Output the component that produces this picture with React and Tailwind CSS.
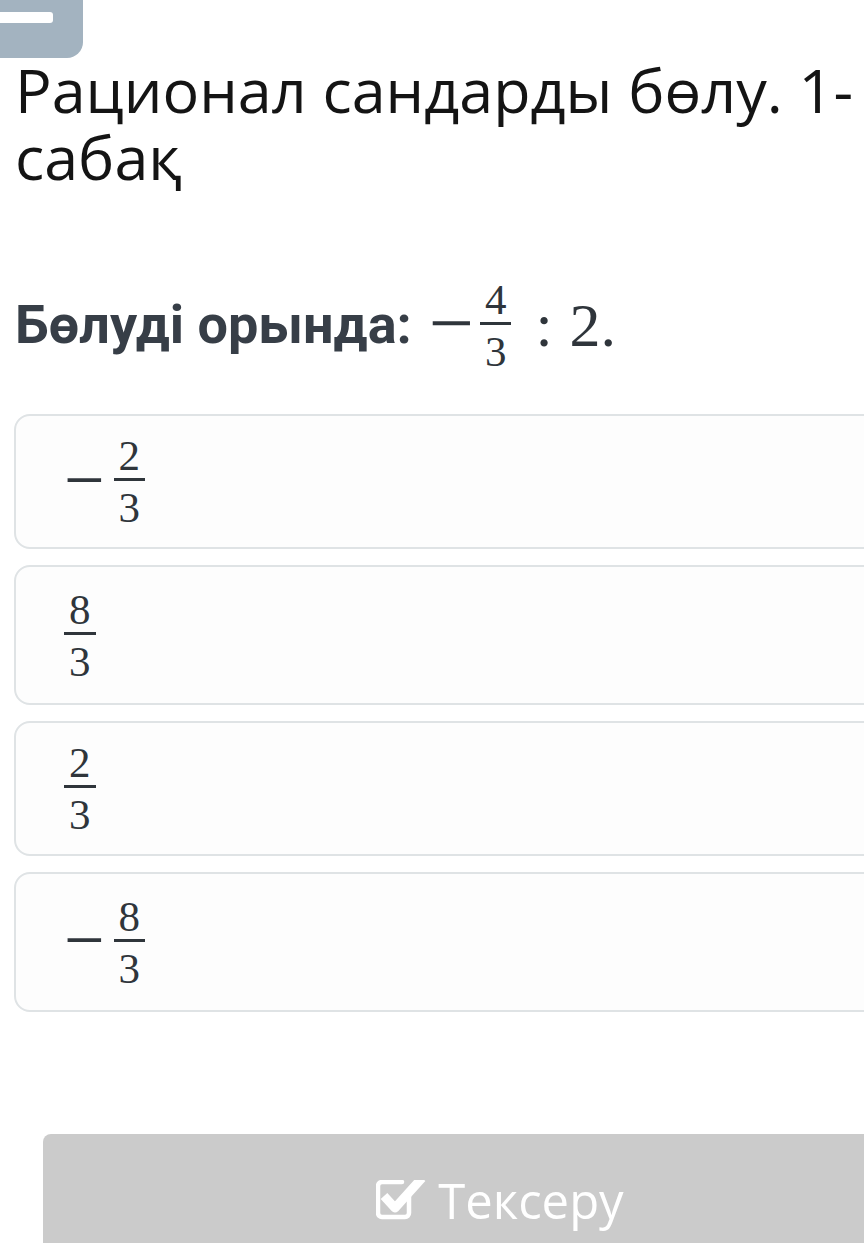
import React from 'react';

const serif = { fontFamily: '"Liberation Serif", "DejaVu Serif", serif' };

const Frac = ({ n, d }) => (
    <span className="inline-flex flex-col items-center text-[43px] text-[#2f353b]" style={serif}>
        <span className="leading-none px-[5px]">{n}</span>
        <span className="h-[3px] w-full bg-[#2f353b] mt-[1px] mb-[5px]" />
        <span className="leading-none px-[5px]">{d}</span>
    </span>
);

const Minus = ({ size = 'text-[80px]' }) => (
    <span className={`leading-none ${size} text-[#2f353b] -translate-y-[2px]`} style={serif}>−</span>
);

const options = [
    { neg: true, n: '2', d: '3', h: 'h-[135px]' },
    { neg: false, n: '8', d: '3', h: 'h-[140px]' },
    { neg: false, n: '2', d: '3', h: 'h-[135px]' },
    { neg: true, n: '8', d: '3', h: 'h-[140px]' },
];

const CheckIcon = () => (
    <svg width="52" height="40" viewBox="0 0 52 40" fill="none">
        <path d="M33 15 V33 a4 4 0 0 1 -4 4 H6 a4 4 0 0 1 -4 -4 V6 a4 4 0 0 1 4 -4 H26" stroke="white" strokeWidth="4.5" strokeLinecap="round" />
        <path d="M8 16 L19 28 L46 -2" stroke="white" strokeWidth="9" strokeLinejoin="round" />
    </svg>
);

const App = () => {
    return (
        <div className="w-[864px] h-[1243px] overflow-hidden bg-white">
            <div className="w-[1000px]">
                <div className="h-[58px] w-[83px] bg-[#a3b3c0] rounded-br-2xl pt-[12px]">
                    <div className="h-[11px] w-[53px] bg-white rounded-r-[3px]" />
                </div>

                <h1
                    className="-mt-[2px] pl-[15px] text-[61px] leading-[67px] font-normal text-[#141414] whitespace-nowrap"
                    style={{ fontFamily: '"Open Sans", "Noto Sans", sans-serif' }}
                >
                    Рационал сандарды бөлу. 1-<br />сабақ
                </h1>

                <div className="mt-[90px] h-[90px] pl-[15px] flex items-center">
                    <span
                        className="text-[54px] leading-none font-bold text-[#373e47]"
                        style={{ fontFamily: 'Roboto, "Liberation Sans", sans-serif' }}
                    >
                        Бөлуді орында:
                    </span>
                    <span className="ml-[17px] flex items-center">
                        <Minus />
                        <span className="ml-[6px]"><Frac n="4" d="3" /></span>
                        <span className="ml-[24px] text-[62px] leading-none text-[#2f353b]" style={serif}>:</span>
                        <span className="ml-[17px] text-[62px] leading-none text-[#2f353b]" style={serif}>2.</span>
                    </span>
                </div>

                <div className="mt-[44px] px-[14px] flex flex-col gap-[16px]">
                    {options.map((o, i) => (
                        <div
                            key={i}
                            className={`${o.h} rounded-[16px] border-2 border-[#dfe3e5] bg-[#fdfdfd] pl-[48px] flex items-center`}
                        >
                            {o.neg && (
                                <span className="mr-[9px] flex items-center"><Minus size="text-[72px]" /></span>
                            )}
                            <Frac n={o.n} d={o.d} />
                        </div>
                    ))}
                </div>

                <div className="mt-[122px] mx-[43px] h-[132px] rounded-lg bg-[#cbcbcb] flex items-center justify-center gap-[10px]">
                    <CheckIcon />
                    <span
                        className="text-[49px] leading-none text-white"
                        style={{ fontFamily: '"Open Sans", "Noto Sans", sans-serif' }}
                    >
                        Тексеру
                    </span>
                </div>
            </div>
        </div>
    );
};

export default App;
